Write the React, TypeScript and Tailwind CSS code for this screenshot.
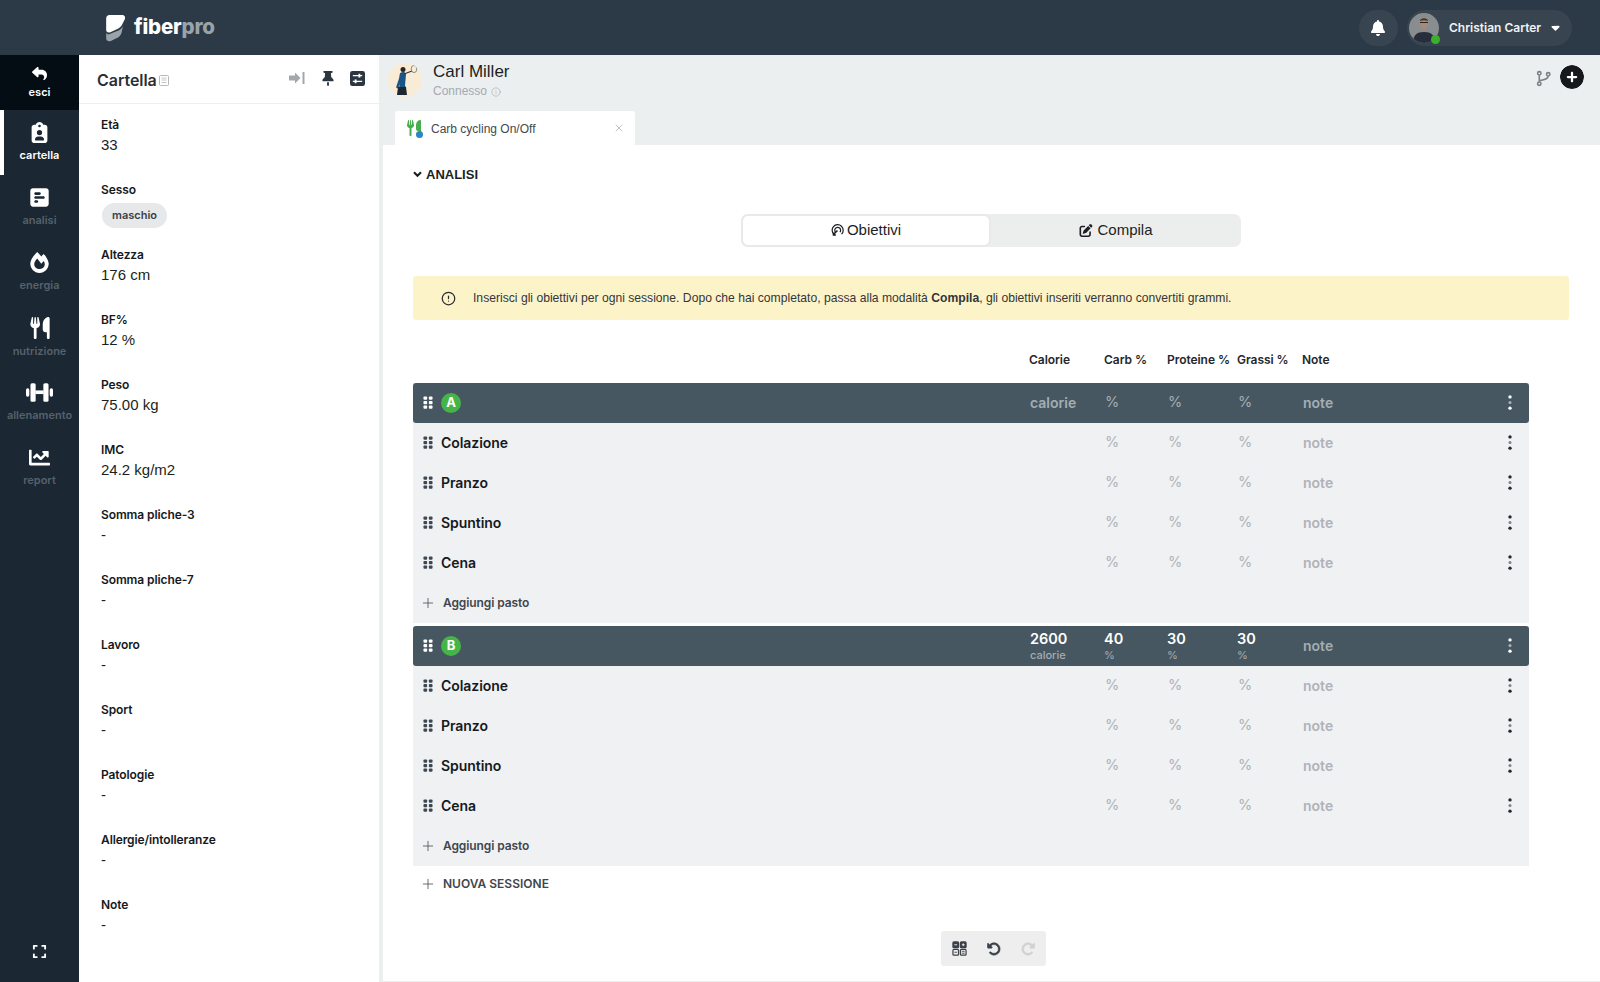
import { Fragment } from "react"
import { FaFireAlt, FaChartLine } from "react-icons/fa"
import {
  FaBell,
  FaCaretDown,
  FaCirclePlus,
  FaClipboardUser,
  FaExpand,
  FaPenToSquare,
  FaReply,
  FaRotateLeft,
  FaRotateRight,
  FaSquarePollHorizontal,
  FaThumbtack,
  FaUtensils,
} from "react-icons/fa6"
import { CircleAlert, Info, Plus, X } from "lucide-react"

const sans = "font-['Inter',sans-serif]"
const helv = "font-['Liberation_Sans',Arial,sans-serif]"

function Dumbbell({ className }: { className?: string }) {
  return (
    <svg viewBox="0 0 26 20" className={className} fill="currentColor">
      <rect x="0" y="6" width="3.200" height="8" rx="1.500" />
      <rect x="4.300" y="1" width="5" height="18" rx="1.500" />
      <rect x="9" y="8" width="8" height="3.500" />
      <rect x="16.700" y="1" width="5" height="18" rx="1.500" />
      <rect x="22.800" y="6" width="3.200" height="8" rx="1.500" />
    </svg>
  )
}

const navItems = [
  { label: "cartella", icon: FaClipboardUser, size: "h-[21px] w-[21px]", active: true },
  { label: "analisi", icon: FaSquarePollHorizontal, size: "h-[21px] w-[21px]" },
  { label: "energia", icon: FaFireAlt, size: "h-[21px] w-[21px]" },
  { label: "nutrizione", icon: FaUtensils, size: "h-[22px] w-[22px]" },
  { label: "allenamento", icon: Dumbbell, size: "h-[21px] w-[27px]" },
  { label: "report", icon: FaChartLine, size: "h-[21px] w-[21px]" },
]

const fields = [
  { label: "Età", value: "33" },
  { label: "Sesso", chip: "maschio" },
  { label: "Altezza", value: "176 cm" },
  { label: "BF%", value: "12 %" },
  { label: "Peso", value: "75.00 kg" },
  { label: "IMC", value: "24.2 kg/m2" },
  { label: "Somma pliche-3", value: "-" },
  { label: "Somma pliche-7", value: "-" },
  { label: "Lavoro", value: "-" },
  { label: "Sport", value: "-" },
  { label: "Patologie", value: "-" },
  { label: "Allergie/intolleranze", value: "-" },
  { label: "Note", value: "-" },
]

const meals = ["Colazione", "Pranzo", "Spuntino", "Cena"]
const rowGrid = "grid grid-cols-[617px_74px_63px_70px_65px_1fr_40px] items-center"

function Grip({ className }: { className?: string }) {
  return (
    <svg viewBox="0 0 10 12" className={className} fill="currentColor">
      {[0, 4.5, 9].map((y) => (
        <Fragment key={y}>
          <rect x="0.5" y={y} width="3.6" height="3.2" rx="0.8" />
          <rect x="5.9" y={y} width="3.6" height="3.2" rx="0.8" />
        </Fragment>
      ))}
    </svg>
  )
}

function Kebab({ color }: { color: string }) {
  return (
    <svg viewBox="0 0 6 16" className={`ml-[2px] h-[15px] w-[6px] ${color}`} fill="currentColor">
      <circle cx="3" cy="2" r="1.8" />
      <circle cx="3" cy="8" r="1.6" opacity="0.55" />
      <circle cx="3" cy="14" r="1.8" />
    </svg>
  )
}

function Logo() {
  return (
    <svg viewBox="0 0 22 30" className="h-[28px] w-[21px]">
      <path d="M1 4.5C1 2.5 2.5 1 4.5 1H18c2.5 0 4 2 3 4.5l-3 6c-1 2.300-3 3.500-5 4.500L5.500 19.500C3 20.500 1 19.500 1 17Z" fill="#ffffff" />
      <path d="M1 19.500c0 1.800 1.800 2.800 3.800 2l8-3.300c3-1.200 5-3 6.200-5.200l-1.500 7c-1 3-3 4.800-5.500 6L6 28.800C3.500 30 1 28.500 1 26Z" fill="#9aa3aa" />
    </svg>
  )
}

function PlayerAvatar() {
  return (
    <svg viewBox="0 0 34 34" className="h-[34px] w-[34px] shrink-0 rounded-full">
      <rect width="34" height="34" fill="#f8ecd6" />
      <path d="M12 10l4-1.500 2 3-1 11 1 2-7 0 1-4-2 5-2-1 3-9Z" fill="#1a5585" />
      <path d="M10 24h8l1 8h-10Z" fill="#1c2730" />
      <circle cx="15" cy="6.500" r="2.500" fill="#33241b" />
      <path d="M16 11l8-3" stroke="#33302c" strokeWidth="1.100" />
      <ellipse cx="26" cy="6" rx="2.800" ry="3.600" fill="none" stroke="#77736c" strokeWidth="0.800" />
    </svg>
  )
}

function UserAvatar() {
  return (
    <div className="relative h-[30px] w-[30px] shrink-0">
      <svg viewBox="0 0 30 30" className="h-[30px] w-[30px] rounded-full">
        <rect width="30" height="30" fill="#8a8d8f" />
        <path d="M4 30c0-8 4-11 11-11s11 3 11 11Z" fill="#262d3b" />
        <ellipse cx="15" cy="10.500" rx="4.200" ry="5.500" fill="#a88a78" />
        <path d="M10.800 8c1-3.800 7.400-3.800 8.400 0-2.800-1-5.600-1-8.400 0Z" fill="#3e342c" />
        <rect x="11" y="9" width="8" height="1" fill="#2a2420" />
      </svg>
      <span className="absolute -bottom-[1px] -right-[1px] h-[9px] w-[9px] rounded-full bg-[#3cb02c]" />
    </div>
  )
}

function SessionHeader({ letter, filled }: { letter: string; filled?: boolean }) {
  const big = "text-[14.5px] font-semibold leading-[17px] text-white"
  const small = "mt-[2px] text-[11px] leading-[12px] text-[#a4adb3]"
  const ph = "text-[14px] font-semibold text-[#a4adb3]"
  const pct = "pl-[1px] text-[14.5px] text-[#a4adb3]"
  return (
    <div className={`${rowGrid} h-10 rounded-[3px] bg-[#475761] pb-[2px] ${sans}`}>
      <div className="flex items-center pl-[10px]">
        <Grip className="h-[13px] w-[10px] text-white" />
        <span className="ml-[8px] mt-[2px] flex h-[20px] w-[20px] items-center justify-center rounded-full bg-[#45b549] text-[13px] font-bold text-white">
          {letter}
        </span>
      </div>
      {filled ? (
        <>
          <div><div className={big}>2600</div><div className={small + " font-medium"}>calorie</div></div>
          <div><div className={big}>40</div><div className={small}>%</div></div>
          <div><div className={big}>30</div><div className={small}>%</div></div>
          <div><div className={big}>30</div><div className={small}>%</div></div>
        </>
      ) : (
        <>
          <div className={ph}>calorie</div>
          <div className={pct}>%</div>
          <div className={pct}>%</div>
          <div className={pct}>%</div>
        </>
      )}
      <div className={ph + " pl-[1px]"}>note</div>
      <div className="flex justify-center"><Kebab color="text-white" /></div>
    </div>
  )
}

function MealRow({ name }: { name: string }) {
  const ph = "pl-[1px] text-[14.5px] text-[#afb3b8]"
  return (
    <div className={`${rowGrid} h-10 pb-[2px] ${sans}`}>
      <div className="flex items-center pl-[10px]">
        <Grip className="h-[13px] w-[10px] text-[#3d4852]" />
        <span className="ml-[8px] text-[14px] font-semibold tracking-[-0.05px] text-[#15191d]">{name}</span>
      </div>
      <div />
      <div className={ph}>%</div>
      <div className={ph}>%</div>
      <div className={ph}>%</div>
      <div className="pl-[1px] text-[14px] font-semibold text-[#afb3b8]">note</div>
      <div className="flex justify-center"><Kebab color="text-[#23282d]" /></div>
    </div>
  )
}

function AddRow({ label, className }: { label: string; className?: string }) {
  return (
    <div className={`flex items-center pl-[7px] text-[12px] font-semibold text-[#3f464d] ${sans} ${className ?? ""}`}>
      <Plus className="h-[16px] w-[16px] text-[#4a5159]" strokeWidth={1.25} />
      <span className="ml-[7px]">{label}</span>
    </div>
  )
}

function Session({ letter, filled }: { letter: string; filled?: boolean }) {
  return (
    <div className="bg-[#f0f1f3]">
      <SessionHeader letter={letter} filled={filled} />
      {meals.map((m) => (
        <MealRow key={m} name={m} />
      ))}
      <AddRow label="Aggiungi pasto" className="h-10 tracking-[-0.1px]" />
    </div>
  )
}

export default function App() {
  return (
    <div className="flex h-[982px] w-[1600px] flex-col overflow-hidden bg-white">
      <header className="flex h-[55px] shrink-0 items-center bg-[#2c3a47] pl-[105px] pr-[28px]">
        <Logo />
        <span className={`ml-[8px] text-[20.5px] font-extrabold tracking-[-0.2px] text-white ${sans}`}>
          fiber<span className="text-[#9aa3aa]">pro</span>
        </span>
        <div className="ml-auto flex items-center">
          <div className="flex h-9 w-[39px] items-center justify-center rounded-full bg-[#384551]">
            <FaBell className="-ml-[2px] h-[16px] w-[16px] text-white" />
          </div>
          <div className="ml-[9px] flex h-9 w-[165px] items-center rounded-full bg-[#384551] pl-[2px]">
            <UserAvatar />
            <span className={`ml-[10px] text-[12px] font-semibold text-[#f0f2f3] ${sans}`}>Christian Carter</span>
            <FaCaretDown className="ml-[8px] h-[13px] w-[13px] text-white" />
          </div>
        </div>
      </header>

      <div className="flex min-h-0 flex-1">
        <nav className={`flex w-[79px] shrink-0 flex-col bg-[#1b2733] ${sans}`}>
          <div className="flex h-[55px] flex-col items-center justify-center bg-[#050d14] pb-[2px] text-white">
            <FaReply className="h-[15px] w-[15px]" />
            <span className="mt-[6px] text-[11px] font-semibold leading-none">esci</span>
          </div>
          {navItems.map(({ label, icon: Icon, size, active }) => (
            <div
              key={label}
              className={`flex h-[65px] flex-col items-center justify-center pb-[2px] ${
                active ? "border-l-4 border-white pr-[4px]" : ""
              }`}
            >
              <Icon className={`${size} text-white`} />
              <span
                className={`mt-[7px] text-[11px] font-semibold leading-none ${
                  active ? "text-white" : "text-[#56616b]"
                }`}
              >
                {label}
              </span>
            </div>
          ))}
          <div className="mt-auto flex h-[62px] items-center justify-center">
            <FaExpand className="h-[15px] w-[15px] text-white" />
          </div>
        </nav>

        <aside className="w-[300px] shrink-0 bg-white">
          <div className="flex h-[49px] items-center border-b border-[#eceeef] pl-[18px] pr-[14px]">
            <span className={`mt-[1px] text-[16px] font-semibold tracking-[-0.05px] text-[#2b2f33] ${sans}`}>Cartella</span>
            <svg viewBox="0 0 10 11" className="ml-[2px] mt-[3px] h-[11px] w-[10px] text-[#b5b9bc]" fill="none" stroke="currentColor">
              <rect x="0.500" y="0.500" width="9" height="10" rx="1" />
              <path d="M2.500 3h5M2.500 5h5M2.500 7.500h5" strokeWidth="0.800" />
            </svg>
            <svg viewBox="0 0 16 14" className="-mt-[2px] ml-auto h-[14px] w-[16px] text-[#a4a7aa]" fill="currentColor">
              <path d="M0 4.500h6V1.500L11.500 7 6 12.500v-3H0Z" />
              <rect x="13.500" y="1" width="2" height="12" />
            </svg>
            <FaThumbtack className="-mt-[2px] ml-[16px] h-[15px] w-[14px] text-[#2b3640]" />
            <svg viewBox="0 0 16 16" className="-mt-[2px] ml-[15px] h-[15px] w-[15px]">
              <rect width="16" height="16" rx="2.500" fill="#2b3640" />
              <path d="M3 5h10M3 11h10" stroke="#ffffff" strokeWidth="1.300" />
              <rect x="9" y="3" width="2" height="4" fill="#ffffff" />
              <rect x="5" y="9" width="2" height="4" fill="#ffffff" />
            </svg>
          </div>
          <div className="pl-[22px] pt-[13px]">
            {fields.map((f) => (
              <div key={f.label} className="h-[65px]">
                <div className={`text-[12px] font-semibold leading-[16px] tracking-[-0.1px] text-[#15191d] ${sans}`}>{f.label}</div>
                {f.chip ? (
                  <span className={`mt-[5px] ml-[1px] inline-block rounded-full bg-[#e6e8ea] px-[10px] py-[4px] text-[11px] font-semibold leading-[17px] text-[#3a4149] ${sans}`}>
                    {f.chip}
                  </span>
                ) : (
                  <div className={`mt-[1px] text-[15px] leading-[22px] text-[#1c1f22] ${helv}`}>{f.value}</div>
                )}
              </div>
            ))}
          </div>
        </aside>

        <main className={`flex min-w-0 flex-1 flex-col bg-[#ebeff0] ${helv}`}>
          <div className="flex h-[56px] shrink-0 items-start pl-[9px] pr-[16px] pt-[8px]">
            <PlayerAvatar />
            <div className="-mt-[1px] ml-[11px]">
              <div className="text-[17px] leading-[20px] text-[#1c1f22]">Carl Miller</div>
              <div className="mt-[2px] flex items-center text-[12px] leading-[15px] text-[#a5a9ad]">
                Connesso
                <Info className="ml-[4px] h-[10px] w-[10px]" strokeWidth={1.5} />
              </div>
            </div>
            <svg viewBox="0 0 16 17" className="ml-auto mt-[7px] h-[17px] w-[15px] text-[#7b8085]" fill="none" stroke="currentColor" strokeWidth="1.700">
              <circle cx="3.500" cy="3" r="1.800" />
              <circle cx="3.500" cy="14" r="1.800" />
              <circle cx="13" cy="4" r="1.800" />
              <path d="M3.500 5v7M13 6c0 3-4 3.500-9.500 5" />
            </svg>
            <FaCirclePlus className="ml-[9px] mt-[2px] h-[24px] w-[24px] rounded-full bg-white text-[#16191c]" />
          </div>
          <div className="flex h-[34px] shrink-0 pl-[16px]">
            <div className="flex w-[240px] items-center rounded-t-[3px] bg-white pl-[11px] pr-[10px]">
              <span className="relative">
                <FaUtensils className="h-[16px] w-[16px] text-[#48ad4c]" />
                <span className="absolute -bottom-[2px] -right-[1px] h-[7px] w-[7px] rounded-full bg-[#2b86c5]" />
              </span>
              <span className="ml-[9px] mt-[2px] text-[12px] text-[#44494e]">Carb cycling On/Off</span>
              <X className="ml-auto h-[12px] w-[12px] text-[#a9adb0]" strokeWidth={1.5} />
            </div>
          </div>
          <div className="ml-[4px] min-h-0 flex-1 border-b border-[#eeeeee] bg-white pl-[30px] pr-[31px]">
            <div className="flex items-center pt-[22px] text-[13px] font-bold leading-[15px] text-[#1c1f22]">
              <svg viewBox="0 0 10 8" className="mr-[4px] h-[7px] w-[9px]" fill="none" stroke="currentColor" strokeWidth="2.400">
                <path d="M1 1.500l4 4 4-4" />
              </svg>
              ANALISI
            </div>
            <div className="ml-[328px] mt-[32px] flex h-[33px] w-[500px] rounded-[7px] bg-[#eceeee] text-[15px] text-[#1c1f22]">
              <div className="flex w-[250px] items-center justify-center rounded-[7px] border-2 border-[#e8eaea] bg-white">
                <svg viewBox="0 0 16 16" className="mr-[3px] h-[13px] w-[13px]" fill="none" stroke="#1c1f22" strokeWidth="1.500">
                  <path d="M4 13A6.800 6.800 0 1 1 13 12.500" />
                  <path d="M6 10.500A3.600 3.600 0 1 1 11 10" />
                  <path d="M8 8L3 13M3 10.500V13.500H6" strokeWidth="1.800" />
                </svg>
                Obiettivi
              </div>
              <div className="flex flex-1 items-center justify-center">
                <FaPenToSquare className="mr-[4px] h-[13px] w-[14px]" />
                Compila
              </div>
            </div>
            <div className="mt-[29px] flex h-[44px] items-center rounded-[3px] bg-[#fdf3c9] pl-[28px] text-[12.15px] text-[#33363a]">
              <CircleAlert className="h-[15px] w-[15px] text-[#2a2c2e]" strokeWidth={2} />
              <span className="ml-[17px]">
                Inserisci gli obiettivi per ogni sessione. Dopo che hai completato, passa alla modalità <b>Compila</b>, gli obiettivi inseriti verranno convertiti grammi.
              </span>
            </div>
            <div className="mr-[40px]">
              <div className={`${rowGrid} mt-[31px] h-[18px] text-[12px] font-semibold tracking-[-0.05px] text-[#24282c] ${sans}`}>
                <div />
                <div className="-ml-[1px]">Calorie</div>
                <div>Carb %</div>
                <div>Proteine %</div>
                <div>Grassi %</div>
                <div>Note</div>
              </div>
              <div className="mt-[14px]">
                <Session letter="A" />
              </div>
              <div className="mt-[3px]">
                <Session letter="B" filled />
              </div>
              <AddRow label="NUOVA SESSIONE" className="mt-[9px] h-[18px]" />
              <div className="ml-[528px] mt-[38px] flex h-[35px] w-[105px] items-center justify-center rounded-[3px] bg-[#eeeeee]">
                <svg viewBox="0 0 16 16" className="h-[15px] w-[15px]" fill="none" stroke="#3b4148" strokeWidth="1.300">
                  <rect x="1" y="1" width="6" height="6" rx="1" fill="#3b4148" />
                  <rect x="9" y="1" width="6" height="6" rx="1" fill="#3b4148" />
                  <rect x="1" y="9" width="6" height="6" rx="1" />
                  <rect x="9" y="9" width="6" height="6" rx="1" />
                  <path d="M2.500 4h3M10.500 4h3M12 2.500v3" stroke="#ffffff" strokeWidth="0.900" />
                  <path d="M2.500 12h3M10.500 11h3M10.500 13h3" strokeWidth="0.900" />
                </svg>
                <FaRotateLeft className="ml-[20px] h-[14px] w-[14px] stroke-[20px] text-[#3b4148]" />
                <FaRotateRight className="ml-[20px] h-[14px] w-[14px] stroke-[20px] text-[#cfd1d2]" />
              </div>
            </div>
          </div>
        </main>
      </div>
    </div>
  )
}
